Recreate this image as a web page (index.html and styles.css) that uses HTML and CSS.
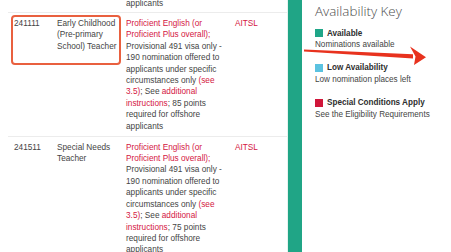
FILE: index.html
```html
<!DOCTYPE html>
<html>
<head>
<meta charset="utf-8">
<link rel="stylesheet" href="styles.css">
</head>
<body>
<div class="page">
  <div class="table">
    <div class="row prev">
      <div class="cell"></div>
      <div class="cell"></div>
      <div class="cell req">applicants</div>
      <div class="cell"></div>
    </div>
    <div class="row">
      <div class="cell">241111</div>
      <div class="cell occ">Early Childhood (Pre-primary School) Teacher</div>
      <div class="cell req"><span class="link">Proficient English (or Proficient Plus overall);</span> Provisional 491 visa only - 190 nomination offered to applicants under specific circumstances only <span class="link">(see 3.5)</span>; See <span class="link">additional instructions</span>; 85 points required for offshore applicants</div>
      <div class="cell"><span class="link">AITSL</span></div>
      <div class="highlight"></div>
    </div>
    <div class="row">
      <div class="cell">241511</div>
      <div class="cell occ">Special Needs Teacher</div>
      <div class="cell req"><span class="link">Proficient English (or Proficient Plus overall);</span> Provisional 491 visa only - 190 nomination offered to applicants under specific circumstances only <span class="link">(see 3.5)</span>; See <span class="link">additional instructions</span>; 75 points required for offshore applicants</div>
      <div class="cell"><span class="link">AITSL</span></div>
    </div>
  </div>
  <div class="bar"></div>
  <aside class="key">
    <h2 class="key-title">Availability Key</h2>
    <div class="key-item">
      <div class="key-name"><span class="swatch swatch-green"></span>Available</div>
      <div class="key-desc">Nominations available</div>
    </div>
    <div class="key-item">
      <div class="key-name"><span class="swatch swatch-blue"></span>Low Availability</div>
      <div class="key-desc">Low nomination places left</div>
    </div>
    <div class="key-item">
      <div class="key-name"><span class="swatch swatch-red"></span>Special Conditions Apply</div>
      <div class="key-desc">See the Eligibility Requirements</div>
    </div>
  </aside>
  <svg class="arrow" width="451" height="252" viewBox="0 0 451 252">
    <polygon points="304,49.6 413,54.2 413,58.6 304,51.4" fill="#e8321e"/>
    <polygon points="410,46.5 426,57.2 414,65 415.5,56.5" fill="#e8321e"/>
  </svg>
</div>
</body>
</html>
```

FILE: styles.css
```css
html, body {
  margin: 0;
  padding: 0;
  background: #fff;
}
body {
  width: 451px;
  height: 252px;
  overflow: hidden;
  font-family: "Liberation Sans", Arial, sans-serif;
}
.page {
  display: flex;
  height: 252px;
  position: relative;
}
.table {
  flex: 0 0 279px;
  padding-left: 8px;
  margin-top: -2px;
  font-size: 8.25px;
  line-height: 11.4px;
  color: #444;
}
.row {
  position: relative;
  display: grid;
  grid-template-columns: 43px 69px 109px 1fr;
  padding: 4.6px 0 4px 6px;
  border-bottom: 1px solid #ececec;
}
.row.prev {
  padding-top: 0;
  padding-bottom: 3px;
}
.cell.occ {
  padding-right: 8px;
}
.cell.req {
  padding-right: 6px;
}
.link {
  color: #d4163f;
}
.highlight {
  position: absolute;
  left: 3px;
  top: 1.5px;
  width: 106px;
  height: 46px;
  border: 2px solid #e9603f;
  border-radius: 4px;
}
.bar {
  flex: 0 0 14px;
  background: #20a586;
  border-left: 1px solid #e6f3ef;
}
.key {
  flex: 1;
  padding-left: 13px;
  color: #444;
}
.key-title {
  margin: 3px 0 7.5px;
  font-family: "Open Sans", "Liberation Sans", sans-serif;
  font-weight: 300;
  font-size: 13.4px;
  line-height: 17px;
  color: #4d4d4d;
}
.key-item {
  margin-bottom: 11.6px;
  font-size: 8.15px;
  line-height: 11.6px;
}
.key-name {
  display: flex;
  align-items: center;
  font-weight: bold;
  color: #2e2e2e;
}
.swatch {
  width: 8px;
  height: 8px;
  margin-right: 4px;
}
.swatch-green { background: #1fa688; }
.swatch-blue { background: #5bc2e0; }
.swatch-red { background: #d0163a; }
.key-desc {
  color: #444;
}
.arrow {
  position: absolute;
  left: 0;
  top: 0;
  pointer-events: none;
}
```
